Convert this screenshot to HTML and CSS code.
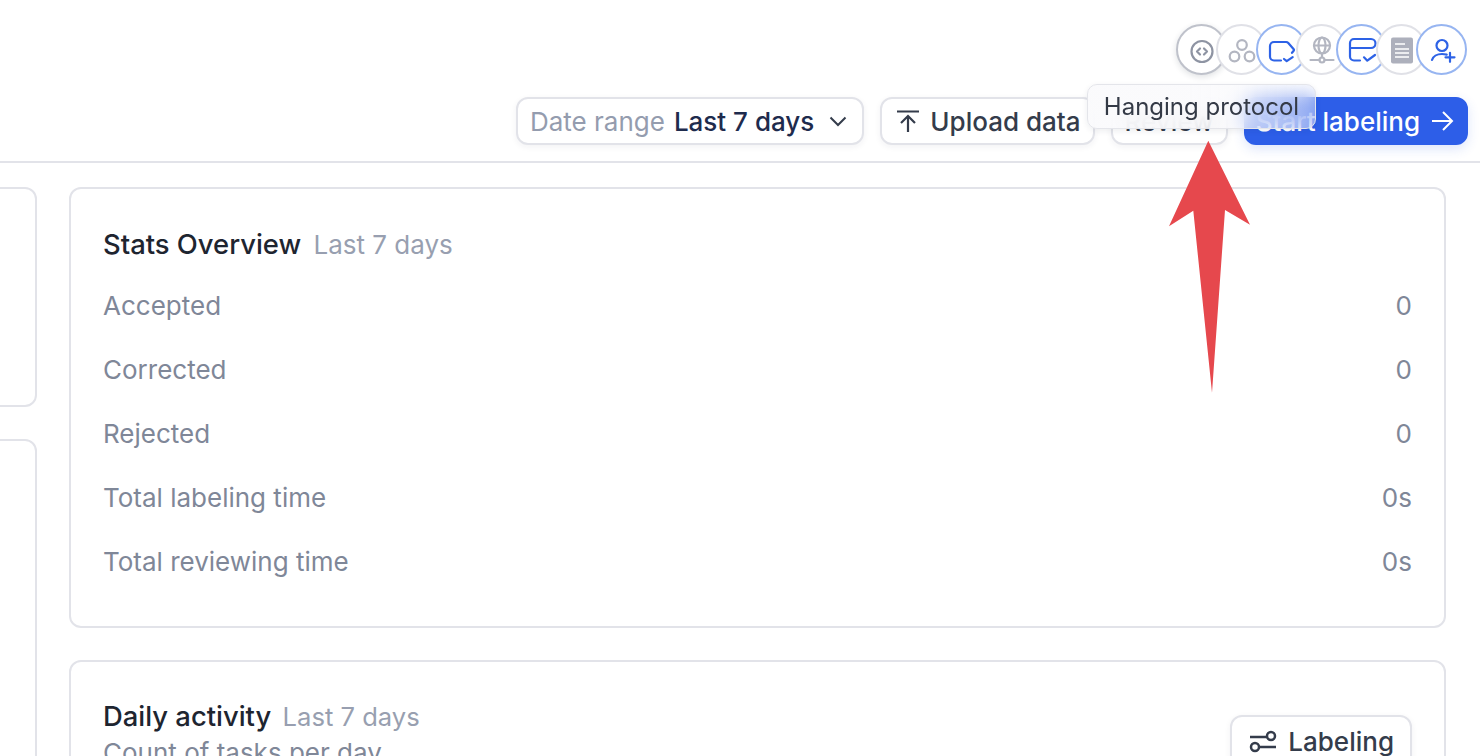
FILE: index.html
```html
<!DOCTYPE html>
<html lang="en">
<head>
    <meta charset="UTF-8">
    <title>Project overview</title>
    <link rel="stylesheet" href="styles.css">
</head>
<body>
    <header class="topbar">
        <!-- Row of overlapping tool icons -->
        <div class="tools">
            <span class="tool tool-hover">
                <svg viewBox="0 0 32 32" class="ico gray"><circle cx="16" cy="17.500" r="10.500"/><path d="M14 14.500l-3 3 3 3M18 14.500l3 3-3 3"/></svg>
            </span>
            <span class="tool">
                <svg viewBox="0 0 32 32" class="ico light"><circle cx="16" cy="11" r="4.800"/><circle cx="8.500" cy="22.500" r="4.800"/><circle cx="23.500" cy="22.500" r="4.800"/></svg>
            </span>
            <span class="tool tool-blue">
                <svg viewBox="0 0 32 32" class="ico blue"><path d="M15 26.500H8a4 4 0 0 1-4-4V12a4 4 0 0 1 4-4h12a3 3 0 0 1 2.300 1l5.200 6a1.500 1.500 0 0 1 0 2l-1.500 1.800"/><path d="M18 25l2.700 2.200 6-4"/></svg>
            </span>
            <span class="tool">
                <svg viewBox="0 0 32 32" class="ico light"><circle cx="16" cy="11.500" r="8"/><ellipse cx="16" cy="11.500" rx="3.500" ry="8"/><path d="M8 11.500h16M16 19.500v4M4.500 26h9M18.500 26h9"/><circle cx="16" cy="26" r="2.500"/></svg>
            </span>
            <span class="tool tool-blue">
                <svg viewBox="0 0 32 32" class="ico blue"><path d="M14 26.500H8a4 4 0 0 1-4-4V9a4 4 0 0 1 4-4h17a4 4 0 0 1 0 9H4"/><path d="M18 23.300l3.300 3.400 7.700-5.700"/></svg>
            </span>
            <span class="tool">
                <svg viewBox="0 0 32 32" class="doc"><rect x="5" y="3.500" width="22" height="26" rx="2"/><path d="M9 10h10M9 15h14M9 19h14M9 23h14"/></svg>
            </span>
            <span class="tool tool-blue">
                <svg viewBox="0 0 32 32" class="ico blue"><circle cx="16" cy="11.500" r="5.500"/><path d="M6 26c1-3.500 5-6 10-6 1.500 0 3 .2 4.700.6M24 18.800v9M19.500 23.300h9"/></svg>
            </span>
        </div>

        <div class="actions">
            <button type="button" class="btn btn-range">
                <span class="muted">Date range</span> <span class="range-val">Last 7 days</span>
                <svg viewBox="0 0 20 20" class="chev"><path d="M2.500 6.500l7.500 7.500 7.500-7.500"/></svg>
            </button>
            <button type="button" class="btn btn-upload">
                <svg viewBox="0 0 24 24" class="upl"><path d="M1 2.500h22M12 23V8M5 14l7-7 7 7"/></svg>
                Upload data
            </button>
            <button type="button" class="btn btn-review">Review</button>
            <button type="button" class="btn btn-primary">
                Start labeling
                <svg viewBox="0 0 24 24" class="arr"><path d="M2 12h20M13 3l9 9-9 9"/></svg>
            </button>
        </div>
    </header>

    <main class="content">
        <div class="col-left">
            <section class="card left-one"></section>
            <section class="card left-two"></section>
        </div>

        <div class="col-right">
            <section class="card stats">
                <h3 class="card-title">Stats Overview <span class="card-sub">Last 7 days</span></h3>
                <div class="stat-row"><span>Accepted</span><span>0</span></div>
                <div class="stat-row"><span>Corrected</span><span>0</span></div>
                <div class="stat-row"><span>Rejected</span><span>0</span></div>
                <div class="stat-row"><span>Total labeling time</span><span>0s</span></div>
                <div class="stat-row"><span>Total reviewing time</span><span>0s</span></div>
            </section>

            <section class="card daily">
                <div>
                    <h3 class="card-title">Daily activity <span class="card-sub">Last 7 days</span></h3>
                    <p class="daily-note">Count of tasks per day</p>
                </div>
                <button type="button" class="btn btn-filter">
                    <svg viewBox="0 0 28 24" class="sliders"><path d="M1 8h17M27 18H10"/><circle cx="22" cy="7" r="4"/><circle cx="6" cy="18" r="4"/></svg>
                    Labeling
                </button>
            </section>
        </div>
    </main>

    <!-- Overlays: tooltip for the hovered tool and the annotation arrow -->
    <div class="tooltip">Hanging protocol</div>
    <svg class="arrow" viewBox="0 0 1480 756"><polygon points="1208.300,140.700 1250,224.700 1225,210 1212,392.800 1193.300,210.700 1169,226.300"/></svg>
</body>
</html>
```

FILE: styles.css
```css
* {
    box-sizing: border-box;
}

html, body {
    margin: 0;
    height: 756px;
    overflow: hidden;
    background: #fff;
    font-family: 'Inter', 'Liberation Sans', sans-serif;
    color: #1f2937;
}

.topbar {
    height: 163px;
    padding: 24px 12px 0 0;
    border-bottom: 2px solid #e2e3e9;
}

.tools {
    display: flex;
    justify-content: flex-end;
    padding-right: 1px;
}

.tool {
    display: flex;
    align-items: center;
    justify-content: center;
    width: 51px;
    height: 51px;
    margin-left: -11px;
    background: #fff;
    border: 2px solid #e0e1e7;
    border-radius: 50%;
}

.tool-hover {
    border-color: #bfc2cb;
    box-shadow: 0 2px 6px rgba(30, 40, 60, 0.14);
}

.tool-blue {
    border-color: #97b5f1;
}

.tool svg {
    width: 32px;
    height: 32px;
}

.ico {
    fill: none;
    stroke-width: 2.200;
    stroke-linecap: round;
    stroke-linejoin: round;
}

.gray {
    stroke: #8e94a3;
}

.light {
    stroke: #b3b6c1;
}

.blue {
    stroke: #2d62e6;
}

.doc rect {
    fill: #adb0bc;
}

.doc path {
    fill: none;
    stroke: #fff;
    stroke-width: 1.600;
}

.actions {
    display: flex;
    justify-content: flex-end;
    gap: 16px;
    margin-top: 22px;
}

.btn {
    display: flex;
    align-items: center;
    height: 48px;
    padding: 0 12px;
    background: #fff;
    border: 2px solid #e2e3e9;
    border-radius: 12px;
    font-family: inherit;
    font-size: 26px;
    font-weight: 500;
    color: #343c4b;
    white-space: nowrap;
    box-shadow: 0 2px 6px rgba(30, 40, 60, 0.06);
}

.btn-range {
    gap: 9px;
    padding: 0 14px 0 12px;
}

.muted {
    color: #949cae;
    font-weight: 400;
}

.range-val {
    color: #1e2b4d;
}

.chev {
    width: 20px;
    height: 20px;
    margin-left: 5px;
    fill: none;
    stroke: #343c4b;
    stroke-width: 2;
}

.btn-upload {
    padding: 0 12px 0 14px;
}

.upl {
    width: 24px;
    height: 24px;
    margin-right: 10px;
    fill: none;
    stroke: #343c4b;
    stroke-width: 2.200;
}

.btn-primary {
    padding-left: 10px;
    background: #2d5ee8;
    border-color: #2d5ee8;
    color: #fff;
    box-shadow: 0 4px 12px rgba(45, 94, 232, 0.16);
}

.arr {
    width: 24px;
    height: 24px;
    margin-left: 10px;
    fill: none;
    stroke: #fff;
    stroke-width: 2;
}

.content {
    display: grid;
    grid-template-columns: 37px 1fr;
    gap: 32px;
    padding: 24px 34px 0 0;
}

.col-left, .col-right {
    display: flex;
    flex-direction: column;
    gap: 32px;
}

.card {
    background: #fff;
    border: 2px solid #e2e3e9;
    border-radius: 12px;
}

.col-left .card {
    margin-left: -30px;
}

.left-one {
    height: 220px;
}

.left-two {
    height: 400px;
}

.stats {
    padding: 37px 32px 33px;
}

.card-title {
    margin: 0;
    height: 36px;
    font-size: 27.400px;
    line-height: 36px;
    font-weight: 500;
    color: #1e2530;
}

.card-sub {
    margin-left: 5px;
    font-size: 26px;
    font-weight: 400;
    color: #989fb0;
}

.stat-row {
    display: flex;
    justify-content: space-between;
    align-items: center;
    height: 64px;
    font-size: 26px;
    color: #7f8798;
}

.stat-row:first-of-type {
    margin-top: 11px;
}

.daily {
    display: flex;
    justify-content: space-between;
    align-items: flex-start;
    padding: 36px 32px 32px;
}

.daily .card-sub {
    margin-left: 4px;
    font-size: 25.600px;
}

.daily-note {
    margin: 1px 0 0;
    font-size: 26px;
    line-height: 36px;
    color: #7f8798;
}

.btn-filter {
    height: 52px;
    margin-top: 17px;
    padding: 0 16px 0 17px;
}

.sliders {
    width: 28px;
    height: 24px;
    margin-right: 11px;
    fill: none;
    stroke: #343c4b;
    stroke-width: 2.500;
}

.tooltip {
    position: absolute;
    left: 1087px;
    top: 84px;
    width: 229px;
    height: 45px;
    background: linear-gradient(90deg, rgba(250, 250, 252, 0.92) 45%, rgba(250, 250, 252, 0.38));
    backdrop-filter: blur(10px);
    border: 1px solid #e4e5ea;
    border-radius: 10px;
    box-shadow: 0 2px 6px rgba(30, 40, 60, 0.08);
    font-size: 24px;
    line-height: 43px;
    text-align: center;
    color: #343a46;
}

.arrow {
    position: absolute;
    left: 0;
    top: 0;
    width: 1480px;
    height: 756px;
    pointer-events: none;
}

.arrow polygon {
    fill: #e6484d;
}
```
